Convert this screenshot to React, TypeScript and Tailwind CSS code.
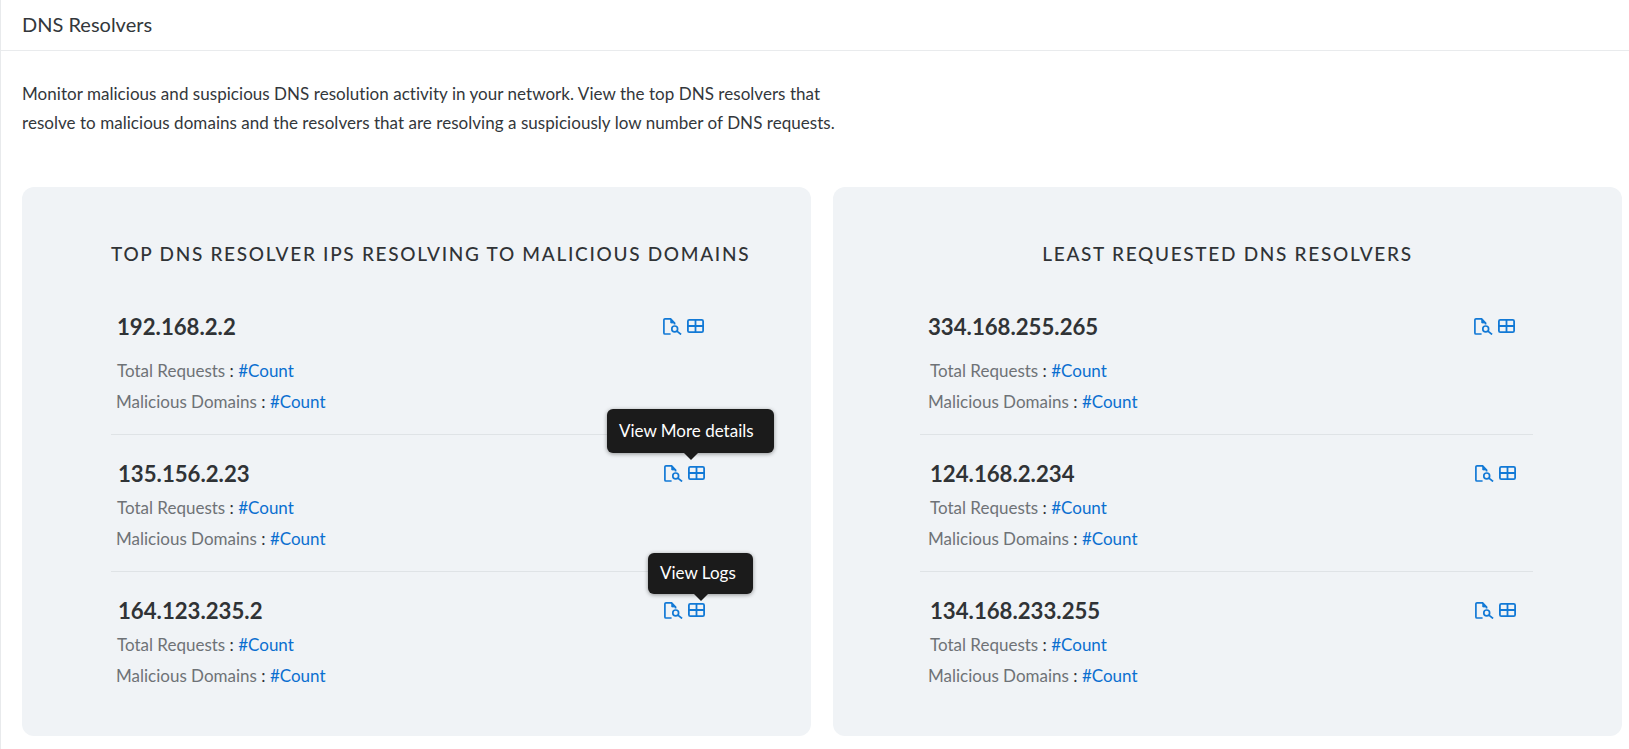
const font = "font-['Lato','Liberation_Sans',sans-serif]";

type Row = { ip: string; tip?: string };

const left: Row[] = [
  { ip: "192.168.2.2" },
  { ip: "135.156.2.23", tip: "View More details" },
  { ip: "164.123.235.2", tip: "View Logs" },
];

const right: Row[] = [
  { ip: "334.168.255.265" },
  { ip: "124.168.2.234" },
  { ip: "134.168.233.255" },
];

function DocSearchIcon() {
  return (
    <svg width="19" height="17" viewBox="0 0 19 17" fill="none" stroke="#1279d6" strokeWidth="1.7">
      <path d="M7.6 16H2a1.1 1.1 0 0 1-1.1-1.1V2A1.1 1.1 0 0 1 2 .9h5.6l4 4.2v1.4" />
      <path d="M7.8 1.4v3.5h3.4z" fill="#1279d6" strokeWidth="1" />
      <circle cx="11.7" cy="10.9" r="2.9" />
      <path d="M13.9 13.1l4.2 3.4" />
    </svg>
  );
}

function TableIcon() {
  return (
    <svg width="17" height="14" viewBox="0 0 17 14" fill="none" stroke="#1279d6" strokeWidth="1.8">
      <rect x="0.9" y="0.9" width="15.2" height="12.2" rx="1.4" />
      <path d="M0.9 7h15.2M8.5 0.9v12.2" />
    </svg>
  );
}

function Tip({ text, className }: { text: string; className: string }) {
  return (
    <div className={`absolute flex items-center px-[12px] rounded-[6px] bg-[#1b1b1b] text-white text-[17px] whitespace-nowrap shadow-[0_1px_4px_rgba(0,0,0,0.4)] ${className}`}>
      {text}
      <span className="absolute -bottom-[7px] left-1/2 -translate-x-1/2 w-0 h-0 border-x-[7px] border-x-transparent border-t-[7px] border-t-[#1b1b1b]" />
    </div>
  );
}

function Resolver({ row, first, alt }: { row: Row; first: boolean; alt: boolean }) {
  const ipPad = alt ? (first ? "pl-[8px]" : "pl-[10px]") : first ? "pl-[6px]" : "pl-[7px]";
  return (
    <div className={`${first ? "h-[127px]" : "h-[137px] border-t border-[#dfe3e6] pt-[19px]"} ${alt ? "-ml-[2px]" : ""}`}>
      <div className={`flex items-center justify-between h-[40px] pr-[17px] ${ipPad}`}>
        <div className="text-[22.2px] font-bold text-[#303336] leading-none">{row.ip}</div>
        <div className={`relative flex items-center gap-[5px] mb-[2px] ${first ? "mr-[1px]" : ""}`}>
          <DocSearchIcon />
          <TableIcon />
          {row.tip === "View More details" && <Tip text={row.tip} className="left-[-57px] bottom-[29px] h-[44px] w-[167px]" />}
          {row.tip === "View Logs" && <Tip text={row.tip} className="left-[-16px] bottom-[25px] h-[41px] w-[105px]" />}
        </div>
      </div>
      <div className={`text-[17px] leading-[31px] text-[#6e7276] ${first ? "mt-[8px]" : "-mt-[2px]"}`}>
        <div className={alt ? "pl-[10px]" : "pl-[6px]"}>
          Total Requests <span className="text-[#303336]">:</span> <span className="text-[#0b6fd0]">#Count</span>
        </div>
        <div className={alt ? "pl-[8px]" : "pl-[5px]"}>
          Malicious Domains <span className="text-[#303336]">:</span> <span className="text-[#0b6fd0]">#Count</span>
        </div>
      </div>
    </div>
  );
}

function Card({ title, rows, alt }: { title: string; rows: Row[]; alt: boolean }) {
  return (
    <div className="flex-1 min-w-0 h-[549px] rounded-[12px] bg-[#f0f3f6] pt-[52px] px-[89px]">
      <h2 className="text-center text-[19px] font-medium tracking-[1.7px] text-[#303336] whitespace-nowrap h-[30px] leading-[30px]">
        {title}
      </h2>
      <div className="mt-[38px]">
        {rows.map((r, i) => (
          <Resolver key={r.ip} row={r} first={i === 0} alt={alt} />
        ))}
      </div>
    </div>
  );
}

export default function App() {
  return (
    <div className={`${font} h-[749px] w-full overflow-hidden bg-white border-l border-[#e8eaec]`}>
      <div className="h-[51px] border-b border-[#e9ebed] pl-[21px] pb-[2px] flex items-center text-[20px] text-[#33373b]">
        DNS Resolvers
      </div>
      <p className="pl-[21px] pt-[28px] text-[17px] leading-[29px] tracking-[0.04px] text-[#33373b] w-[856px]">
        Monitor malicious and suspicious DNS resolution activity in your network. View the top DNS resolvers that resolve to malicious domains and the resolvers that are resolving a suspiciously low number of DNS requests.
      </p>
      <div className="flex gap-[22px] pl-[21px] pr-[7px] mt-[50px]">
        <Card title="TOP DNS RESOLVER IPS RESOLVING TO MALICIOUS DOMAINS" rows={left} alt={false} />
        <Card title="LEAST REQUESTED DNS RESOLVERS" rows={right} alt={true} />
      </div>
    </div>
  );
}
